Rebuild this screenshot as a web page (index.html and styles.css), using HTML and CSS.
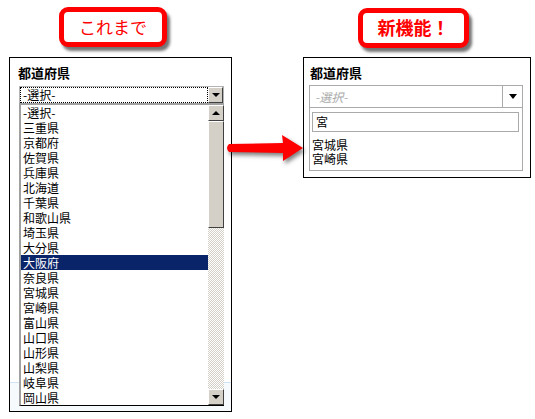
FILE: index.html
```html
<!DOCTYPE html>
<html lang="ja">
<head>
    <meta charset="UTF-8">
    <title>都道府県 選択</title>
    <link rel="stylesheet" href="styles.css">
</head>
<body>
    <div class="stage">
        <div class="col col-old">
            <div class="badge badge-old">これまで</div>
            <div class="panel panel-old">
                <h3 class="title">都道府県</h3>
                <div class="combo">
                    <span class="combo-text">-選択-</span>
                    <span class="combo-btn"><span class="tri-down"></span></span>
                </div>
                <div class="listbox">
                    <ul class="items">
                        <li>-選択-</li>
                        <li>三重県</li>
                        <li>京都府</li>
                        <li>佐賀県</li>
                        <li>兵庫県</li>
                        <li>北海道</li>
                        <li>千葉県</li>
                        <li>和歌山県</li>
                        <li>埼玉県</li>
                        <li>大分県</li>
                        <li class="selected">大阪府</li>
                        <li>奈良県</li>
                        <li>宮城県</li>
                        <li>宮崎県</li>
                        <li>富山県</li>
                        <li>山口県</li>
                        <li>山形県</li>
                        <li>山梨県</li>
                        <li>岐阜県</li>
                        <li>岡山県</li>
                    </ul>
                    <div class="scrollbar">
                        <span class="sb-btn"><span class="tri-up"></span></span>
                        <span class="sb-thumb"></span>
                        <span class="sb-track"></span>
                        <span class="sb-btn"><span class="tri-down"></span></span>
                    </div>
                </div>
            </div>
        </div>

        <div class="col col-new">
            <div class="badge badge-new">新機能！</div>
            <div class="panel panel-new">
                <h3 class="title">都道府県</h3>
                <div class="chosen">
                    <span class="chosen-text">-選択-</span>
                    <span class="chosen-btn"><span class="tri-down small"></span></span>
                </div>
                <div class="chosen-drop">
                    <div class="search">宮</div>
                    <ul class="results">
                        <li>宮城県</li>
                        <li>宮崎県</li>
                    </ul>
                </div>
            </div>
        </div>

        <!-- arrow between the two panels -->
        <svg class="arrow" width="82" height="34" viewBox="0 0 82 34">
            <path d="M4 12 L58 11 L57 3 L78 16 L58 29 L58 21 L4 20 Q0 16 4 12 Z" fill="#f00"/>
        </svg>
    </div>
</body>
</html>
```

FILE: styles.css
```css
body {
    margin: 0;
    background: #fff;
    font-family: "Noto Sans CJK JP", sans-serif;
    color: #000;
}
.stage {
    position: relative;
    width: 535px;
    height: 419px;
    display: flex;
    align-items: flex-start;
}
.col-old {
    margin-left: 9px;
    width: 223px;
    padding-top: 7px;
}
.col-new {
    margin-left: 71px;
    width: 228px;
    padding-top: 8px;
}
.badge {
    box-sizing: border-box;
    height: 40px;
    border: 5px solid #f00;
    border-radius: 9px;
    background: #fff;
    color: #f00;
    font-size: 17px;
    line-height: 29px;
    text-align: center;
    box-shadow: 3px 4px 3px rgba(0, 0, 0, 0.55);
}
.badge-old {
    width: 108px;
    margin-left: 50px;
    margin-bottom: 10px;
}
.badge-new {
    width: 111px;
    margin-left: 55px;
    margin-bottom: 9px;
    font-size: 18px;
    font-weight: bold;
}
.panel {
    box-sizing: border-box;
    border: 1px solid #000;
    background: #fff;
}
.title {
    margin: 0;
    font-size: 13px;
    font-weight: bold;
    line-height: 16px;
}

/* old style: native select + listbox */
.panel-old {
    padding: 7px 7px 5px 9px;
    background: linear-gradient(to bottom, #fff 324px, #cfe3f5 324px, #cfe3f5 325px, #f7fafd 325px);
}
.panel-old .title {
    margin-left: -1px;
    margin-bottom: 5px;
}
.combo {
    display: flex;
    height: 17px;
    border: 1px solid #b4b4b4;
    border-bottom: none;
    box-sizing: border-box;
    font-size: 12px;
}
.combo-text {
    flex: 1;
    border: 1px dotted #000;
    line-height: 14px;
    padding-left: 2px;
}
.combo-btn {
    width: 15px;
    background: #d4d0c8;
    border-top: 1px solid #fff;
    border-left: 1px solid #fff;
    border-right: 1px solid #404040;
    border-bottom: 1px solid #404040;
    box-sizing: border-box;
    display: flex;
    align-items: center;
    justify-content: center;
}
.tri-down, .tri-up {
    width: 0;
    height: 0;
    border-left: 4px solid transparent;
    border-right: 4px solid transparent;
}
.tri-down {
    border-top: 4px solid #000;
}
.tri-up {
    border-bottom: 4px solid #000;
}
.tri-down.small {
    border-top-width: 5px;
}
.listbox {
    display: flex;
    height: 303px;
    box-sizing: border-box;
    border-top: 2px solid #a0a0a0;
    border-left: 2px solid #a0a0a0;
    border-bottom: 1px solid #000;
    background: #fff;
}
.items {
    list-style: none;
    margin: 0;
    padding: 0;
    flex: 1;
    font-size: 12px;
}
.items li {
    height: 15px;
    line-height: 15px;
    padding-left: 2px;
}
.items li.selected {
    background: #0a246a;
    color: #fff;
}
.scrollbar {
    width: 16px;
    display: flex;
    flex-direction: column;
}
.sb-btn, .sb-thumb {
    box-sizing: border-box;
    background: #d4d0c8;
    border-top: 1px solid #fff;
    border-left: 1px solid #fff;
    border-right: 1px solid #404040;
    border-bottom: 1px solid #404040;
}
.sb-btn {
    height: 16px;
    display: flex;
    align-items: center;
    justify-content: center;
}
.sb-thumb {
    height: 107px;
}
.sb-track {
    flex: 1;
    background: repeating-conic-gradient(#d4d0c8 0 25%, #fff 0 50%) 0 0 / 2px 2px;
}

/* new style: searchable dropdown */
.panel-new {
    height: 121px;
    padding: 7px 7px 0 5px;
}
.panel-new .title {
    margin-left: 1px;
    margin-bottom: 4px;
}
.chosen {
    display: flex;
    height: 23px;
    box-sizing: border-box;
    border: 1px solid #aaa;
}
.chosen-text {
    flex: 1;
    color: #aaa;
    font-style: italic;
    font-size: 12px;
    line-height: 21px;
    padding-left: 5px;
}
.chosen-btn {
    width: 19px;
    border-left: 1px solid #aaa;
    display: flex;
    align-items: center;
    justify-content: center;
}
.chosen-drop {
    height: 63px;
    box-sizing: border-box;
    border: 1px solid #aaa;
    border-top: none;
    padding: 4px 3px 0 2px;
}
.search {
    height: 20px;
    box-sizing: border-box;
    border: 1px solid #aaa;
    font-size: 12px;
    line-height: 18px;
    padding-left: 3px;
}
.results {
    list-style: none;
    margin: 6px 0 0;
    padding: 0;
    font-size: 12px;
    line-height: 14px;
}

.arrow {
    position: absolute;
    left: 225px;
    top: 132px;
    filter: drop-shadow(2px 3px 2px rgba(0, 0, 0, 0.5));
}
```
